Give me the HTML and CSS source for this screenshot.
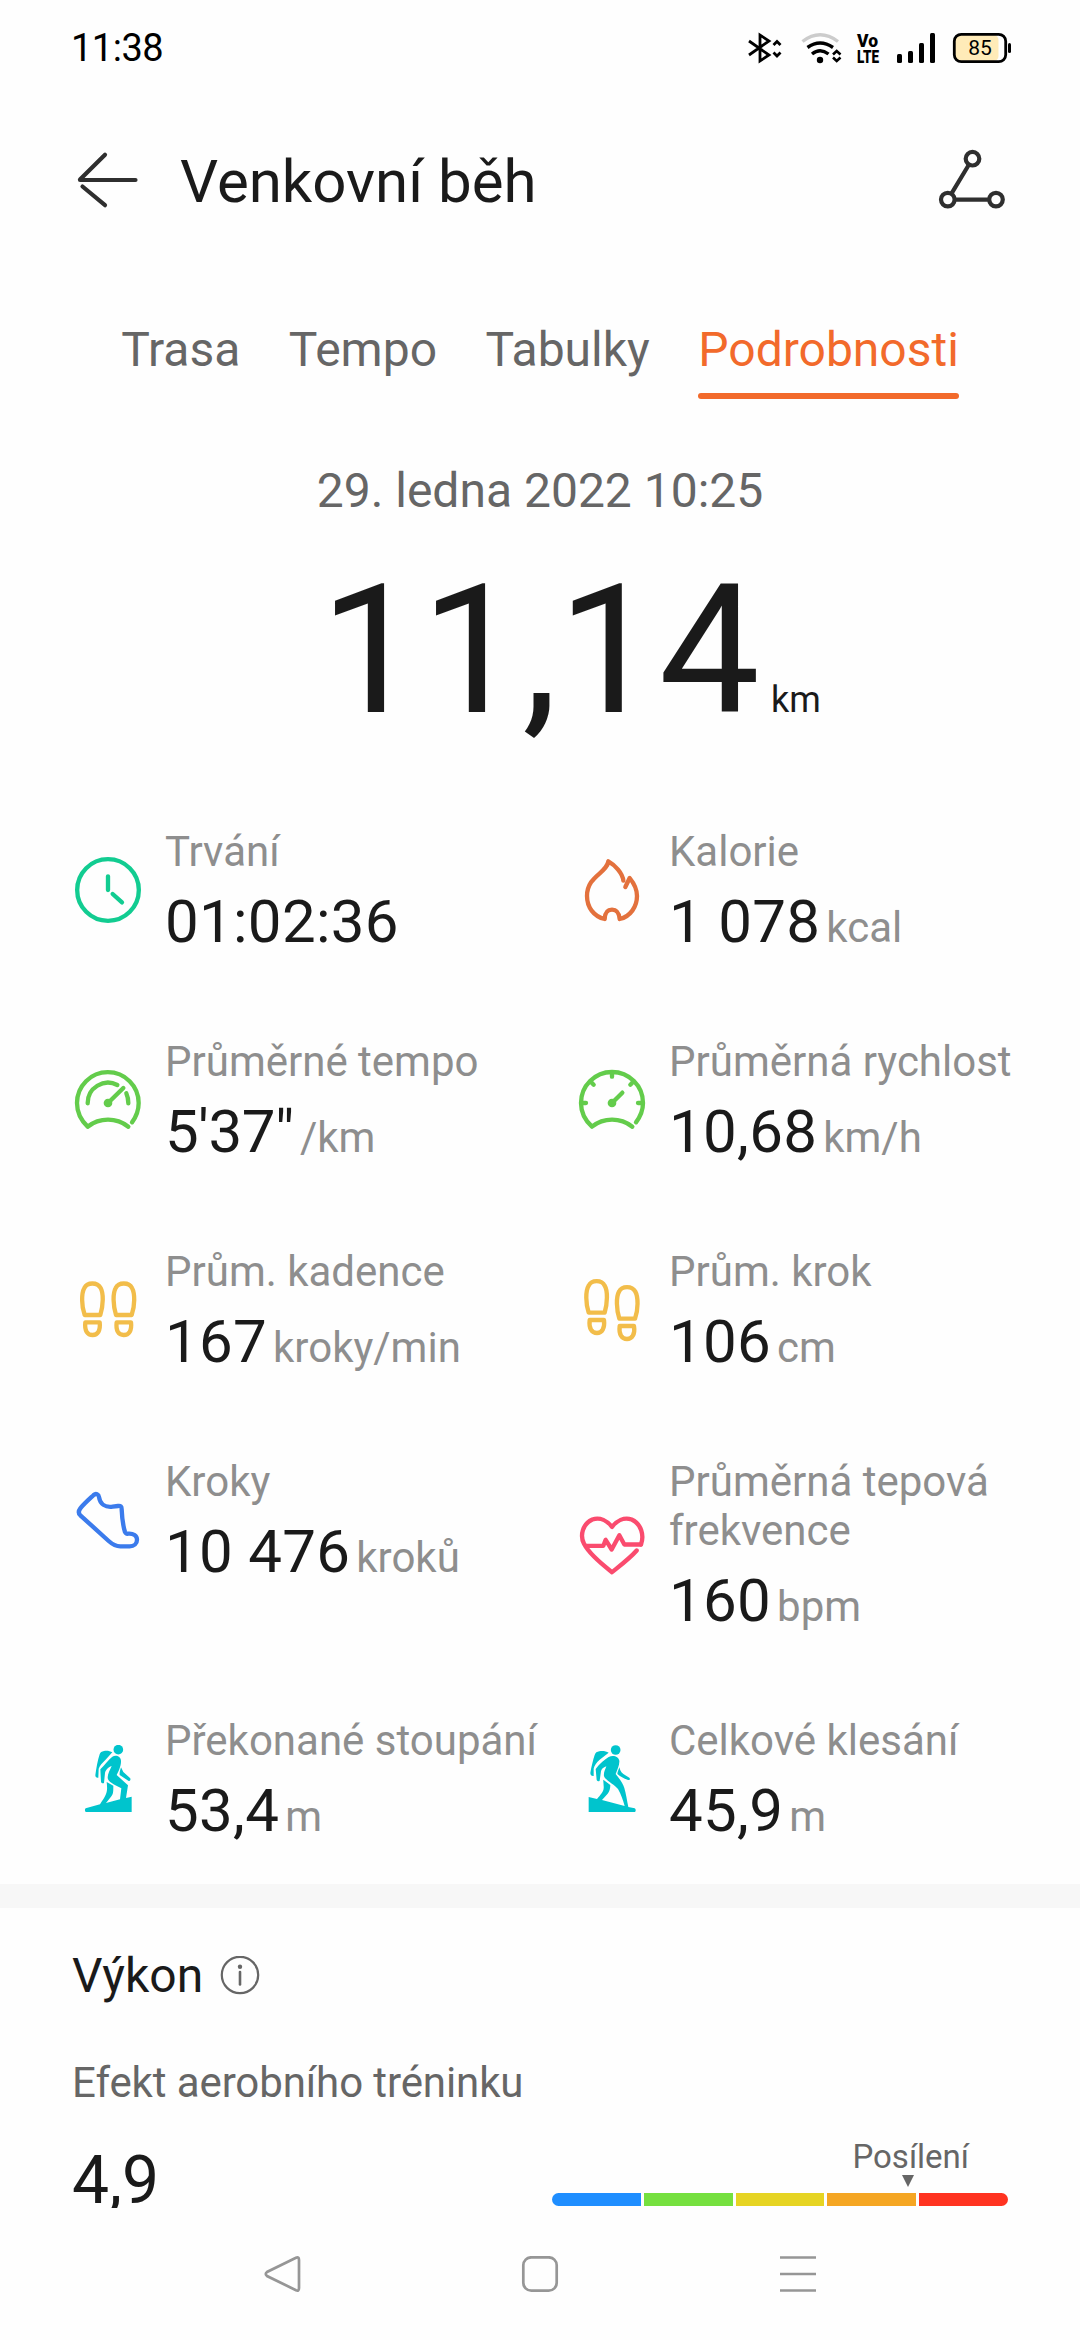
FILE: index.html
```html
<!DOCTYPE html>
<html lang="cs">
<head>
  <meta charset="UTF-8">
  <meta name="viewport" content="width=device-width, initial-scale=1.0">
  <title>Venkovní běh</title>
  <link rel="stylesheet" href="styles.css">
</head>
<body>
  <div class="status-bar">
    <span class="clock">11:38</span>
    <svg class="status-icons" width="268" height="60" viewBox="746 18 268 60">
      <!-- bluetooth -->
      <g fill="none" stroke="#000" stroke-width="2.8">
        <path d="M749 41 L769 55 L760 61 V35 L769 41 L749 55"/>
        <path d="M773.5 45 L777 41.5 L780.5 45 M773.5 52.5 L777 56 L780.5 52.5"/>
      </g>
      <!-- wifi -->
      <g fill="none" stroke="#000" stroke-width="3.4">
        <path d="M802.500 41.500 Q820 28 838 41.500" stroke="#ccc"/>
        <path d="M807.500 47.500 Q820 38.500 833 47.500"/>
        <path d="M812 54 Q820 47.500 828.500 54"/>
        <path d="M833 54.500 L836.700 51 L840.500 54.500 M833 57.500 L836.700 61 L840.500 57.500" stroke-width="2.600"/>
      </g>
      <circle cx="820" cy="60" r="3.2"/>
      <text class="volte">
        <tspan x="857" y="46.500" textLength="21" lengthAdjust="spacingAndGlyphs">Vo</tspan>
        <tspan x="857" y="62.500" textLength="22" lengthAdjust="spacingAndGlyphs">LTE</tspan>
      </text>
      <!-- signal -->
      <rect x="897" y="54" width="5" height="9" rx="1.500"/>
      <rect x="908" y="51" width="5" height="12" rx="1.500"/>
      <rect x="919" y="43" width="5" height="20" rx="1.500"/>
      <rect x="930" y="33" width="5" height="30" rx="1.500"/>
      <!-- battery -->
      <rect x="955" y="35" width="43.500" height="26" rx="5" fill="#ffebb8"/>
      <rect x="954.300" y="34.300" width="51.400" height="27.400" rx="7" fill="none" stroke="#000" stroke-width="2.800"/>
      <rect x="1008" y="43" width="3" height="10" rx="1.500"/>
      <text class="battery-level" x="980" y="55.200" text-anchor="middle">85</text>
    </svg>
  </div>

  <div class="content">
    <div class="header">
      <svg class="back-icon" width="72" height="72" viewBox="72 146 72 72">
        <path d="M105 154.700 L80 179.600 M80 180 H135.500 M82.500 186.500 L105 205.200"/>
      </svg>
      <h1 class="title">Venkovní běh</h1>
      <svg class="share-icon" width="72" height="72" viewBox="936 146 72 72">
        <circle cx="972.500" cy="158.700" r="6.800"/>
        <circle cx="947.800" cy="199.600" r="6.800"/>
        <circle cx="996" cy="199.600" r="6.800"/>
        <path d="M969 164.500 L951.300 193.800 M954.600 199.600 H989.200"/>
      </svg>
    </div>

    <div class="tabs">
      <div class="tab">Trasa</div>
      <div class="tab">Tempo</div>
      <div class="tab">Tabulky</div>
      <div class="tab active">Podrobnosti</div>
    </div>

    <div class="date">29. ledna 2022 10:25</div>
    <div class="distance">
      <span class="distance-value">11,14</span>
      <span class="distance-unit">km</span>
    </div>

    <div class="stats">
      <div class="stat">
        <svg class="stat-icon teal-green" viewBox="66 138 216 216">
          <circle cx="174" cy="240" r="92.500"/>
          <path d="M174 199 V240 M188 252 L216 277"/>
        </svg>
        <div>
          <div class="label">Trvání</div>
          <div class="value">01:02:36</div>
        </div>
      </div>
      <div class="stat">
        <svg class="stat-icon orange" viewBox="48 138 216 216">
          <path d="M190 212 C188 190 165 165 145 154 C140 190 81 198 81 258 C81 292 102 320 134 327 C135 310 139 299 156 299 C173 299 177 310 179 327 C211 320 231 290 231 258 C231 236 222 220 209 204 L196 231"/>
        </svg>
        <div>
          <div class="label">Kalorie</div>
          <div class="value">1 078<span class="unit">kcal</span></div>
        </div>
      </div>

      <div class="stat">
        <svg class="stat-icon green" viewBox="66 768 216 216">
          <path d="M235 950 C199 922 149 922 113 950 C92 930 81 908 81 879 A92.500 92.500 0 1 1 266 879 C266 903 258 921 246 937"/>
          <path d="M113 880 A61 61 0 0 1 202 825 M229 850 Q235 863 235 880"/>
          <path d="M174 879 L220 834"/>
          <circle class="solid" cx="174" cy="879" r="13"/>
        </svg>
        <div>
          <div class="label">Průměrné tempo</div>
          <div class="value pace">5'37"<span class="unit">/km</span></div>
        </div>
      </div>
      <div class="stat">
        <svg class="stat-icon green" viewBox="48 768 216 216">
          <path d="M217 950 C181 922 131 922 96 950 C74 930 63 908 63 879 A92.500 92.500 0 1 1 249 879 C249 903 240 921 228 937"/>
          <path d="M156 790 V800 M93 816 L101 824 M219 816 L211 824 M66 879 H78 M246 879 H234"/>
          <path d="M156 879 L187 848"/>
          <circle class="solid" cx="156" cy="879" r="13"/>
        </svg>
        <div>
          <div class="label">Průměrná rychlost</div>
          <div class="value">10,68<span class="unit">km/h</span></div>
        </div>
      </div>

      <div class="stat">
        <svg class="stat-icon yellow" viewBox="66 138 216 216">
          <path d="M104 255 C94 228 94 190 103 174 C112 156 142 156 152 174 C161 190 160 225 151 255 Z"/>
          <path d="M198 255 C189 225 188 190 197 174 C206 156 237 156 246 174 C255 190 255 228 245 255 Z"/>
          <path d="M106 277 H149 C152 302 143 315 128 315 C112 315 103 302 106 277 Z"/>
          <path d="M200 277 H243 C246 302 237 315 221 315 C205 315 197 302 200 277 Z"/>
        </svg>
        <div>
          <div class="label">Prům. kadence</div>
          <div class="value">167<span class="unit">kroky/min</span></div>
        </div>
      </div>
      <div class="stat">
        <svg class="stat-icon yellow" viewBox="48 138 216 216">
          <path d="M86 248 C77 221 76 183 86 167 C95 149 125 149 134 167 C144 183 142 220 134 248 Z"/>
          <path d="M178 266 C169 238 168 201 177 185 C186 167 216 167 226 185 C235 201 235 239 225 266 Z"/>
          <path d="M89 270 H132 C135 295 126 309 111 309 C95 309 86 295 89 270 Z"/>
          <path d="M179 288 H222 C226 313 216 327 201 327 C185 327 176 313 179 288 Z"/>
        </svg>
        <div>
          <div class="label">Prům. krok</div>
          <div class="value">106<span class="unit">cm</span></div>
        </div>
      </div>

      <div class="stat">
        <svg class="stat-icon blue" viewBox="66 768 216 216">
          <path d="M131 795 C138 789 146 793 147 801 C150 822 166 833 188 830 L204 828 C212 827 215 829 215 838 C216 862 219 887 225 906 C227 911 229 912 235 911 C250 910 261 917 261 929 C261 941 252 949 239 949 H211 C199 949 186 942 176 933 L91 856 C85 850 85 843 91 835 C102 821 117 808 131 795 Z"/>
        </svg>
        <div>
          <div class="label">Kroky</div>
          <div class="value">10 476<span class="unit">kroků</span></div>
        </div>
      </div>
      <div class="stat">
        <svg class="stat-icon pink" viewBox="48 841.500 216 216">
          <path d="M243 942 H193 L178 914 L155 957 L137 928 L130 946 H78"/>
          <path d="M243 942 C253 915 244 880 215 867 C192 859 170 871 156 889 C142 871 120 859 97 867 C68 880 59 915 72 940 C87 969 125 1001 156 1025 C181 1005 210 983 230 960"/>
        </svg>
        <div>
          <div class="label">Průměrná tepová frekvence</div>
          <div class="value">160<span class="unit">bpm</span></div>
        </div>
      </div>

      <div class="stat">
        <svg class="stat-icon hiker" viewBox="66 135 216 216">
          <circle cx="205" cy="149" r="14.500"/>
          <path d="M136 226 C139 204 143 180 149 163 C151 157 155 154 162 153 C171 151 180 153 187 157 L166 180 C157 189 149 197 146 206 L145 233 C139 234 136 231 136 226 Z"/>
          <path d="M151 208 C164 195 176 178 187 170 C197 164 212 168 213 182 C214 197 205 215 200 225 L234 256 L228 294 L245 290 V336 H107 C104 333 104 327 107 325 L150 313 C158 300 165 291 168 282 C173 270 171 257 170 246 L190 257 C190 275 190 282 183 290 L168 309 L210 298 L214 265 C199 256 180 250 174 238 C170 226 180 210 185 198 C174 202 166 211 165 219 L162 249 C158 251 154 249 153 245 Z"/>
          <path d="M213 202 L220 216 L240 234 C243 237 241 243 236 243 L209 225 C208 217 211 210 213 202 Z"/>
        </svg>
        <div>
          <div class="label">Překonané stoupání</div>
          <div class="value">53,4<span class="unit">m</span></div>
        </div>
      </div>
      <div class="stat">
        <svg class="stat-icon hiker" viewBox="48 135 216 216">
          <circle cx="167" cy="150" r="14.500"/>
          <path d="M91 219 C94 201 99 180 104 165 C106 158 111 155 118 154 C128 152 139 154 146 158 L119 179 C110 187 103 196 101 206 V228 C95 229 91 225 91 219 Z"/>
          <path d="M107 207 C118 192 134 178 146 171 C160 164 176 170 178 182 C179 196 171 211 167 222 C178 235 189 251 193 264 C198 281 201 302 205 321 L224 325 C228 327 228 333 225 336 H86 V291 L111 297 C121 285 130 277 131 265 C132 256 129 247 130 239 L151 255 C151 266 148 275 143 281 L126 300 L194 318 C189 300 183 282 174 267 C164 254 134 239 132 228 C130 217 137 207 139 199 C130 202 124 207 123 214 L119 242 C116 245 112 244 110 240 Z"/>
          <path d="M178 202 C181 215 188 222 196 226 L208 233 C212 237 209 241 204 240 C193 236 182 231 172 222 C173 214 176 209 178 202 Z"/>
        </svg>
        <div>
          <div class="label">Celkové klesání</div>
          <div class="value">45,9<span class="unit">m</span></div>
        </div>
      </div>
    </div>

    <div class="performance">
      <div class="performance-title">
        <h2>Výkon</h2>
        <svg width="40" height="40" viewBox="0 1 40 40">
          <circle cx="20" cy="20" r="18.200" fill="none" stroke="#666" stroke-width="2.200"/>
          <circle cx="20" cy="11.700" r="2.200" fill="#666"/>
          <path d="M20 17 V29.500" stroke="#666" stroke-width="2.600" stroke-linecap="round"/>
        </svg>
      </div>
      <div class="effect-name">Efekt aerobního tréninku</div>
      <div class="effect">
        <div class="effect-value">4,9</div>
        <div class="scale">
          <div class="scale-label">Posílení</div>
          <div class="scale-pointer"></div>
          <div class="scale-bar">
            <span class="scale-blue"></span>
            <span class="scale-green"></span>
            <span class="scale-yellow"></span>
            <span class="scale-orange"></span>
            <span class="scale-red"></span>
          </div>
        </div>
      </div>
    </div>
  </div>

  <div class="nav-bar">
    <svg width="40" height="40" viewBox="0 0 40 40">
      <path d="M34 1.800 Q37 0.500 37 4 V32 Q37 35.500 34 34.200 L5 20 Q2.500 18 5 16 Z"/>
    </svg>
    <svg width="40" height="40" viewBox="0 0 40 40">
      <rect x="3.300" y="1.300" width="33.400" height="33.400" rx="8"/>
    </svg>
    <svg width="40" height="40" viewBox="0 0 40 40">
      <path d="M2 1.500 H38 M2 18 H38 M2 34.500 H38"/>
    </svg>
  </div>
</body>
</html>
```
FILE: styles.css
```css
* {
  box-sizing: border-box;
}
body {
  margin: 0;
  width: 1080px;
  height: 2340px;
  display: flex;
  flex-direction: column;
  background-color: #fefefe;
  color: #1a1a1a;
  font-family: Roboto, sans-serif;
  overflow: hidden;
}
.status-bar {
  height: 96px;
  padding: 0 66px 0 71px;
  display: flex;
  justify-content: space-between;
  align-items: center;
  color: black;
}
.clock {
  font-size: 38px;
  line-height: 44px;
  letter-spacing: -0.5px;
}
.volte {
  font-family: Roboto, sans-serif;
  font-size: 19px;
  font-weight: 900;
}
.battery-level {
  font-size: 21px;
}
.content {
  flex: 1;
  min-height: 0;
  overflow: hidden;
}
.header {
  height: 172px;
  padding: 0 72px;
  display: flex;
  align-items: center;
}
.header svg {
  fill: none;
  stroke: #2f2f2f;
  stroke-width: 4.2;
}
.back-icon {
  stroke-linecap: round;
}
.title {
  margin: 0 auto 0 36px;
  font-size: 60px;
  font-weight: normal;
  line-height: 70px;
}
.tabs {
  height: 77px;
  margin-top: 54px;
  display: flex;
  justify-content: center;
  gap: 48.5px;
  font-size: 48px;
  line-height: 56px;
  color: #666;
}
.active {
  color: #f26a2b;
}
.active::after {
  content: "";
  display: block;
  height: 6px;
  margin-top: 15px;
  border-radius: 3px;
  background-color: #f26a2b;
}
.date {
  margin-top: 64px;
  font-size: 48px;
  line-height: 56px;
  text-align: center;
  color: #666;
}
.distance {
  margin-top: 26px;
  height: 211px;
  display: grid;
  grid-template-columns: 1fr auto 1fr;
  align-items: baseline;
}
.distance-value {
  grid-column: 2;
  font-size: 180px;
  line-height: 211px;
}
.distance-unit {
  margin-left: 11px;
  font-size: 36px;
}
.stats {
  display: grid;
  grid-template-columns: 504px 1fr;
  row-gap: 80px;
  align-items: start;
  padding: 71px 0 38px 72px;
}
.stat {
  display: flex;
  align-items: center;
}
.stat-icon {
  flex: none;
  width: 72px;
  height: 72px;
  margin-right: 21px;
  fill: none;
  stroke: currentColor;
  stroke-width: 13;
  stroke-linecap: round;
  stroke-linejoin: round;
}
.solid {
  fill: currentColor;
  stroke: none;
}
.hiker {
  color: #00c4cd;
  fill: currentColor;
  stroke: none;
}
.teal-green {
  color: #12cc91;
}
.green {
  color: #63cc4b;
}
.orange {
  color: #e3713d;
}
.yellow {
  color: #f2bd4a;
}
.blue {
  color: #3b7bec;
}
.pink {
  color: #fa4b6e;
}
.label {
  font-size: 42px;
  line-height: 49px;
  color: #8e8e8e;
}
.value {
  margin-top: 10px;
  height: 71px;
  font-size: 60px;
  line-height: 71px;
  letter-spacing: 0.3px;
  white-space: nowrap;
}
.pace {
  letter-spacing: -0.4px;
}
.unit {
  margin-left: 6px;
  font-size: 42px;
  line-height: 1;
  letter-spacing: 0;
  color: #8e8e8e;
}
.performance {
  border-top: 24px solid #f7f7f7;
  padding: 40px 72px 0;
}
.performance-title {
  display: flex;
  align-items: center;
  gap: 17px;
}
.performance-title h2 {
  margin: 0;
  font-size: 48px;
  font-weight: normal;
  line-height: 56px;
}
.effect-name {
  margin-top: 54px;
  font-size: 42px;
  line-height: 49px;
  letter-spacing: -0.1px;
  color: #666;
}
.effect {
  margin-top: 35px;
  display: flex;
  justify-content: space-between;
}
.effect-value {
  font-size: 66px;
  line-height: 77px;
}
.scale {
  width: 456px;
}
.scale-label {
  margin-right: 39px;
  font-size: 33px;
  line-height: 30px;
  text-align: right;
  color: #666;
}
.scale-pointer {
  width: 12px;
  margin-top: 3px;
  margin-left: 350px;
  border: 6px solid transparent;
  border-top: 12px solid #666;
  border-bottom: none;
}
.scale-bar {
  margin-top: 6px;
  display: flex;
  gap: 3px;
  border-radius: 7px;
  overflow: hidden;
}
.scale-bar span {
  flex: 1;
  height: 13px;
}
.scale-blue {
  background-color: #1f8eff;
}
.scale-green {
  background-color: #75e03f;
}
.scale-yellow {
  background-color: #e6d423;
}
.scale-orange {
  background-color: #f5a623;
}
.scale-red {
  background-color: #ff3320;
}
.nav-bar {
  height: 132px;
  padding: 48px 262px 0;
  display: flex;
  justify-content: space-between;
}
.nav-bar svg {
  fill: none;
  stroke: #969696;
  stroke-width: 2.7;
}
```
